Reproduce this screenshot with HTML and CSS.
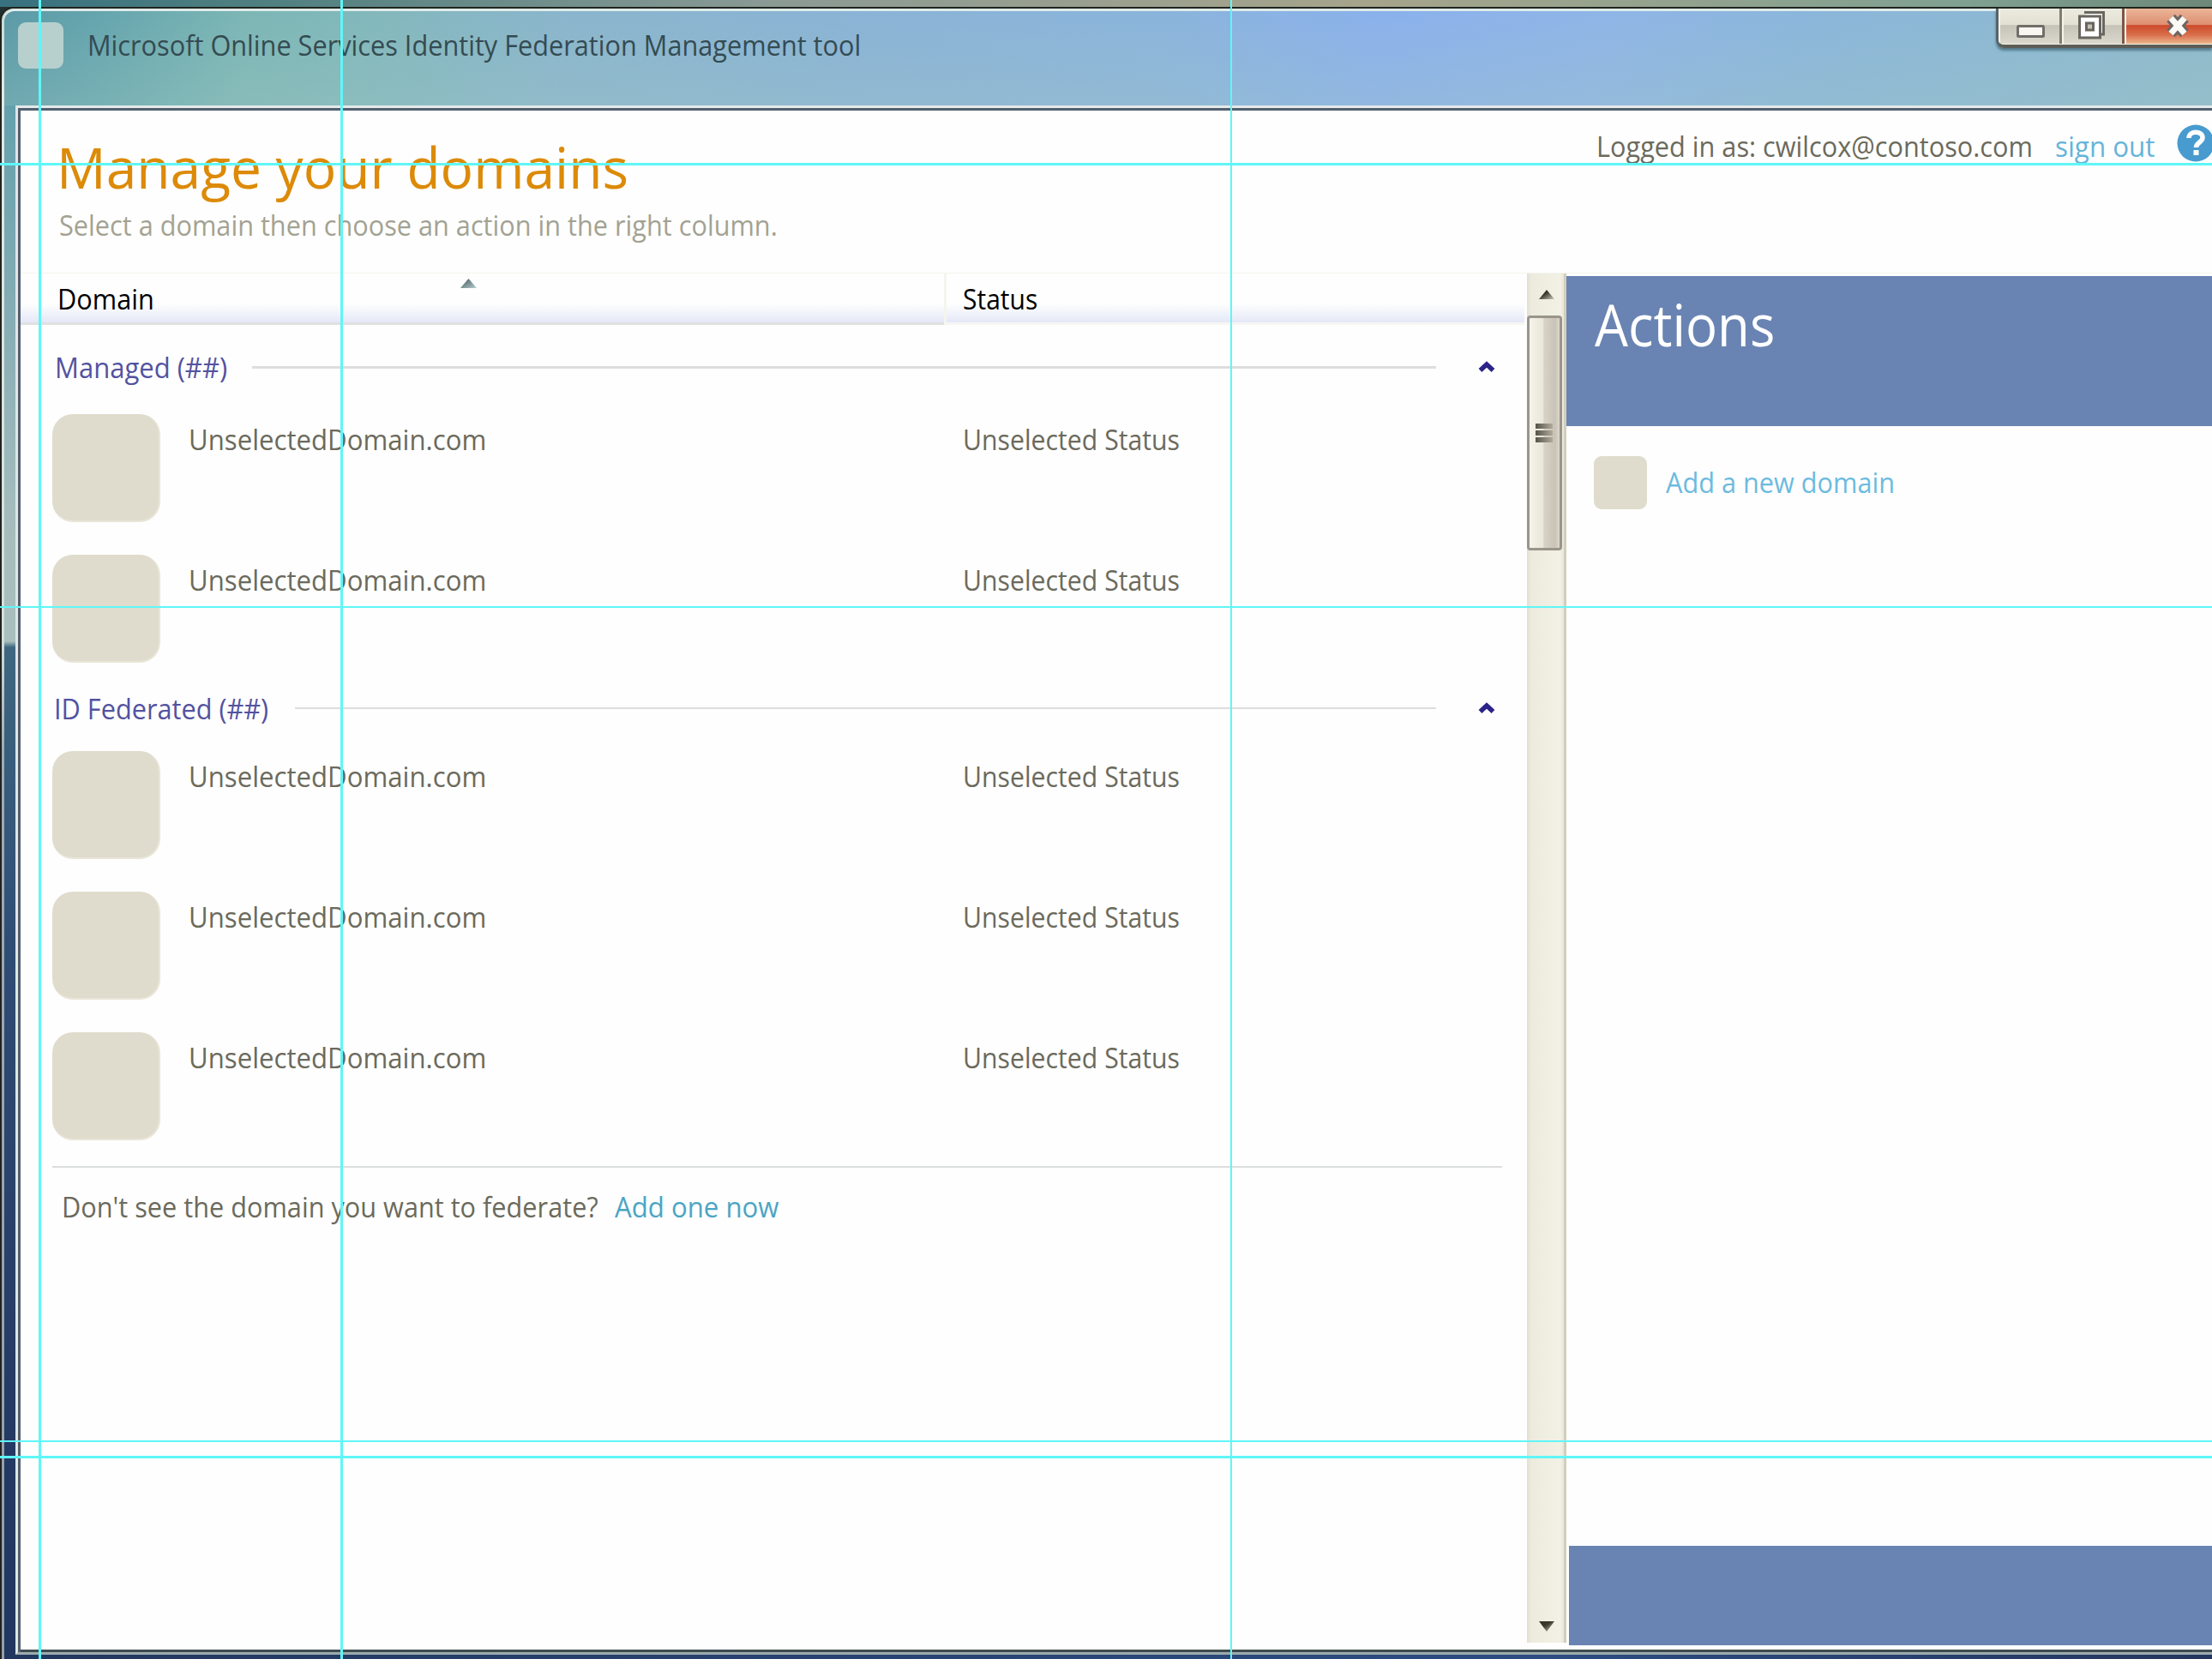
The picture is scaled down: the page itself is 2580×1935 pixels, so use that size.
FILE: index.html
```html
<!DOCTYPE html>
<html lang="en">
<head>
<meta charset="utf-8">
<title>Microsoft Online Services Identity Federation Management tool</title>
<link rel="stylesheet" href="styles.css">
</head>
<body>
<div class="window">
  <header class="titlebar">
    <span class="app-icon"></span>
    <span class="app-title"><span class="t t-title">Microsoft Online Services Identity Federation Management tool</span></span>
    <div class="controls">
      <span class="ctl ctl-min"><svg width="34" height="16" viewBox="0 0 34 16"><rect x="1.5" y="1.5" width="30" height="12" rx="1" fill="#f7f6f0" stroke="#716e69" stroke-width="3"/></svg></span>
      <span class="ctl ctl-max"><svg width="34" height="34" viewBox="0 0 34 34"><path d="M8 2.500H30.500V28H25" fill="#fff" stroke="#69665f" stroke-width="3"/><rect x="2.500" y="7" width="24" height="25" fill="#fff" stroke="#69665f" stroke-width="3"/><rect x="10.500" y="15" width="8" height="8" fill="#c5c2b8" stroke="#69665f" stroke-width="3"/></svg></span>
      <span class="ctl ctl-close"><svg width="32" height="28" viewBox="0 0 32 28"><path d="M8 5L24 23M24 5L8 23" stroke="#6d6663" stroke-width="13"/><path d="M8 5L24 23M24 5L8 23" stroke="#fbf9f6" stroke-width="7"/></svg></span>
    </div>
  </header>
  <main class="client">
    <div class="page-head">
      <div class="heading">
        <h1><span class="t t-h1">Manage your domains</span></h1>
        <p class="sub"><span class="t t-sub">Select a domain then choose an action in the right column.</span></p>
      </div>
      <div class="account">
        <span class="cell-log"><span class="t t-log">Logged in as: cwilcox@contoso.com</span></span>
        <span class="cell-out"><a class="t t-out">sign out</a></span>
        <svg class="help" width="44" height="44" viewBox="0 0 44 44"><circle cx="22" cy="22" r="21.500" fill="#479bcf"/><path d="M14 16C14 7 30 7 30 15.500C30 21 22.500 21 22.500 27" fill="none" stroke="#fff" stroke-width="5.500"/><rect x="19.500" y="30" width="6" height="6" fill="#fff"/></svg>
      </div>
    </div>
    <div class="body">
      <section class="list">
        <div class="cols">
          <div class="col col-domain"><span class="cell-domain"><span class="t t-domain">Domain</span></span><svg class="sort" width="19" height="11" viewBox="0 0 19 11"><defs><linearGradient id="s" x1="0" y1="0" x2="1" y2="1"><stop offset="0.2" stop-color="#55696d"/><stop offset="1" stop-color="#b8d0d3"/></linearGradient></defs><path d="M9.500 0L19 11H0Z" fill="url(#s)"/></svg></div>
          <div class="col col-status"><span class="t t-status">Status</span></div>
        </div>
        <div class="group g1"><span class="cell-man"><span class="t t-man">Managed (##)</span></span><i class="rule"></i><svg class="chev" width="20" height="14" viewBox="0 0 20 14"><path d="M2.500 11L10 4L17.500 11" fill="none" stroke="#2c2389" stroke-width="5.500"/></svg></div>
        <div class="row"><span class="tile"></span><span class="name"><span class="t t-name">UnselectedDomain.com</span></span><span class="t t-stat">Unselected Status</span></div>
        <div class="row"><span class="tile"></span><span class="name"><span class="t t-name">UnselectedDomain.com</span></span><span class="t t-stat">Unselected Status</span></div>
        <div class="group g2"><span class="cell-fed"><span class="t t-fed">ID Federated (##)</span></span><i class="rule thin"></i><svg class="chev" width="20" height="14" viewBox="0 0 20 14"><path d="M2.500 11L10 4L17.500 11" fill="none" stroke="#2c2389" stroke-width="5.500"/></svg></div>
        <div class="row"><span class="tile"></span><span class="name"><span class="t t-name">UnselectedDomain.com</span></span><span class="t t-stat">Unselected Status</span></div>
        <div class="row"><span class="tile"></span><span class="name"><span class="t t-name">UnselectedDomain.com</span></span><span class="t t-stat">Unselected Status</span></div>
        <div class="row"><span class="tile"></span><span class="name"><span class="t t-name">UnselectedDomain.com</span></span><span class="t t-stat">Unselected Status</span></div>
        <div class="foot"><span class="cell-q"><span class="t t-q">Don't see the domain you want to federate?</span></span><a class="t t-add">Add one now</a></div>
      </section>
      <div class="scroll">
        <svg class="up" width="20" height="12" viewBox="0 0 20 12"><defs><linearGradient id="a" x1="0" y1="0" x2="1" y2="1"><stop offset="0.4" stop-color="#38352b"/><stop offset="1" stop-color="#cfcbbd"/></linearGradient></defs><path d="M10 0L19 11H1Z" fill="url(#a)"/></svg>
        <div class="thumb"><i></i><i></i><i></i></div>
        <svg class="down" width="20" height="12" viewBox="0 0 20 12"><path d="M1 0H19L10 12Z" fill="url(#a)"/></svg>
      </div>
      <aside class="actions">
        <div class="actions-head"><span class="t t-act">Actions</span></div>
        <div class="action"><span class="mini"></span><a class="t t-new">Add a new domain</a></div>
        <div class="actions-foot"></div>
      </aside>
    </div>
  </main>
</div>
<i class="guide v v1"></i><i class="guide v v2"></i><i class="guide v v3"></i>
<i class="guide h h1"></i><i class="guide h h2"></i><i class="guide h h3"></i><i class="guide h h4"></i>
</body>
</html>
```
FILE: styles.css
```css
* { box-sizing: border-box; }
body {
  margin: 0;
  width: 2580px;
  height: 1935px;
  position: relative;
  overflow: hidden;
  padding-top: 8px;
  font: 33px/44px "Open Sans", "Noto Sans", sans-serif;
  color: #6b6a5c;
  background: linear-gradient(90deg, #38717f 0, #4f7f80 300px, #8b9a94 900px, #a6a48b 1600px, #7fa091 2300px, #6d8878 2580px) 0 0 / 100% 8px no-repeat, #22312f;
}
/* labels are condensed slightly from the left edge */
.t { white-space: nowrap; display: block; width: max-content; transform-origin: 0 50%; transform: scaleX(.93); }
.window {
  height: 1927px;
  border-top: 2px solid #20251f;
  border-left: 2px solid #22221e;
  border-top-left-radius: 16px;
  padding: 3px 0 0 3px;
  background: linear-gradient(#c4dbd7, #e3e8e4 5%, #d4e0dd 38%, #9fabb5 45%, #929eab);
  display: flex;
  flex-direction: column;
}
.titlebar {
  height: 110px;
  flex: none;
  display: flex;
  align-items: flex-start;
  border-top-left-radius: 12px;
  box-shadow: 0 -3px #dfebe8;
  background: linear-gradient(180deg, rgba(160,200,195,0), rgba(160,200,195,.3)), linear-gradient(97deg, #5b9aa7 0, #66a6ae 120px, #7cb6b5 280px, #82b8bb 420px, #8ab5cc 640px, #8ab3d6 1000px, #8bb4dc 1350px, #8bb1ec 1600px, #8fb5e7 1850px, #8bb6da 2100px, #8fbacb 2580px);
}
.app-icon { width: 53px; height: 54px; margin: 13px 0 0 16px; border-radius: 9px; background: #b7d0ce; }
.app-title { margin: 18px 0 0 28px; color: #344b52; flex: 1; }
.controls { display: flex; height: 46px; width: 252px; margin-top: -3px; border-left: 3px solid #56636a; border-bottom: 4px solid #5c5d56; border-bottom-left-radius: 9px; box-shadow: 0 3px 3px #557b8c; overflow: hidden; }
.ctl { flex: none; display: flex; justify-content: center; align-items: flex-start; height: 43px; border: 2px solid #f6f3e9; border-top: 0; background: linear-gradient(#ecebdf 0, #e2e0d3 46%, #c5c3b7 48%, #dbd9cd 100%); }
.ctl-min { width: 74px; border-right: 0; box-shadow: inset -3px 0 #817d72; padding-top: 19px; }
.ctl-max { width: 73px; border-right: 0; box-shadow: inset -3px 0 #7e5549; padding: 2px 6px 0 0; }
.ctl-close { width: 150px; justify-content: flex-start; padding: 6px 0 0 44px; background: linear-gradient(#eab598 0, #df8f72 45%, #ce4a2c 48%, #d96f4b 75%, #eab58b 100%); }
.client {
  flex: 1;
  min-height: 0;
  margin: 0 0 5px 13px;
  border-top: 3px solid #e4e9ea;
  border-left: 3px solid #e1e6e4;
  border-bottom: 3px solid #9cabad;
  background: #fefefe;
  box-shadow: inset 3px 3px #52606f, inset 0 -3px #3e4c50;
  padding: 3px 0 3px 3px;
  display: flex;
  flex-direction: column;
}
/* glass frame along the left and bottom edges of the client area */
.window::before { content: ""; position: absolute; left: 5px; top: 123px; width: 13px; height: 1807px; background: linear-gradient(#64a0ac 0, #86adb5 250px, #a5bcbc 480px, #a9bfbe 625px, #3f6781 632px, #2f4c74 1000px, #263b63 1500px, #22375f 1807px); }
.window::after { content: ""; position: absolute; left: 5px; top: 1930px; width: 2575px; height: 5px; background: linear-gradient(90deg, #22375f, #2c4c82 70%, #24365f); }
.page-head { height: 189px; flex: none; display: flex; justify-content: space-between; padding-left: 45px; }
h1 { margin: 20px 0 0; font-size: 66px; line-height: 90px; font-weight: 400; color: #dc8a08; height: 90px; }
.t-h1 { transform: translateX(-3px) scaleX(.971); }
.sub { margin: 2px 0 0; color: #a3a292; }
.account { display: flex; width: 718px; padding-top: 20px; }
.cell-log { width: 510px; }
.cell-out { width: 117px; margin-left: 25px; color: #65b4da; }
.t-out { transform: scaleX(.95); }
.help { margin: -4px 0 0 25px; flex: none; }
.body { display: flex; flex: 1; min-height: 0; border-top: 1px solid #f3f3ec; }
.list { width: 1757px; flex: none; }
.cols { display: flex; height: 60px; color: #000; }
.col { padding-top: 8px; border-bottom: 3px solid #dfe1e0; background: linear-gradient(#fefefe 62%, #e4e8f7 100%); }
.col-domain { width: 1077px; padding-left: 43px; display: flex; }
.col-status { flex: 1; border-left: 3px solid #f5f5f0; border-bottom-color: #f5f6f2; padding-left: 19px; margin-right: 3px; }
.cell-domain { width: 470px; }
.t-status { transform: scaleX(.91); }
.sort { margin-top: -2px; }
.group { display: flex; align-items: center; height: 44px; color: #5352a0; padding-left: 40px; }
.g1 { margin-top: 28px; }
.g2 { margin-top: 31px; padding-left: 39px; }
.rule { flex: 1; height: 3px; background: #dcdede; margin-top: -1px; }
.rule.thin { height: 2px; margin-top: -2px; }
.chev { margin: -2px 37px 0 49px; }
.cell-man { width: 230px; }
.t-man { transform: scaleX(.94); }
.cell-fed { width: 281px; }
.row { display: flex; height: 127px; padding-left: 37px; }
.g1 + .row { margin-top: 32px; }
.g2 + .row { margin-top: 27px; }
.row + .row { margin-top: 37px; }
.tile { flex: none; width: 126px; height: 126px; border-radius: 24px; background: #dfdccd; border: solid #e9e5d8; border-width: 0 2px 2px 0; }
.name { flex: none; width: 936px; padding-left: 33px; }
.row .t { margin-top: 8px; }
.t-name { transform: scaleX(.944); }
.t-stat { transform: scaleX(.916); }
.foot { margin: 29px 29px 0 37px; border-top: 2px solid #dcdede; padding: 24px 0 0 11px; display: flex; }
.cell-q { width: 645px; }
.t-add { color: #4ba5c4; transform: scaleX(.945); }
.scroll { width: 46px; height: 1597px; flex: none; border-right: 3px solid #d2cebd; background: linear-gradient(90deg, #e3dfd2 0, #edebde 12%, #f2f1e5 90%, #e9e6d8); display: flex; flex-direction: column; }
.up { margin: 19px 0 0 13px; }
.down { margin: auto 0 13px 13px; }
.thumb { width: 41px; height: 274px; margin-top: 18px; border: 3px solid #99958a; border-radius: 4px; background: linear-gradient(90deg, #f6f4ea, #e9e6da 45%, #d8d3c7 48%, #c9c2b7 85%, #ddd8cc); display: flex; flex-direction: column; justify-content: center; align-items: center; gap: 2px; }
.thumb i { width: 20px; height: 6px; margin-left: -2px; background: linear-gradient(90deg, #57534a, #b0aa9b); }
.actions { flex: 1; display: flex; flex-direction: column; padding-top: 3px; }
.actions-head { height: 175px; background: #6984b2; color: #fff; font-size: 67px; line-height: 90px; padding: 11px 0 0 33px; }
.t-act { transform: scaleX(.92); }
.action { display: flex; padding: 35px 0 0 32px; color: #6cbbdf; }
.mini { width: 62px; height: 62px; border-radius: 9px; background: #dfdccd; margin-right: 22px; }
.action .t { margin-top: 9px; }
.actions-foot { margin: auto 0 5px 3px; height: 116px; background: #6984b2; }
.guide { position: absolute; background: #5ff6f8; }
.v { top: 0; height: 1935px; width: 3px; }
.h { left: 0; width: 2580px; height: 3px; }
.v1 { left: 45px; } .v2 { left: 397px; } .v3 { left: 1435px; width: 2px; }
.h1 { top: 190px; } .h2 { top: 707px; height: 2px; } .h3 { top: 1680px; height: 2px; } .h4 { top: 1698px; }
```
